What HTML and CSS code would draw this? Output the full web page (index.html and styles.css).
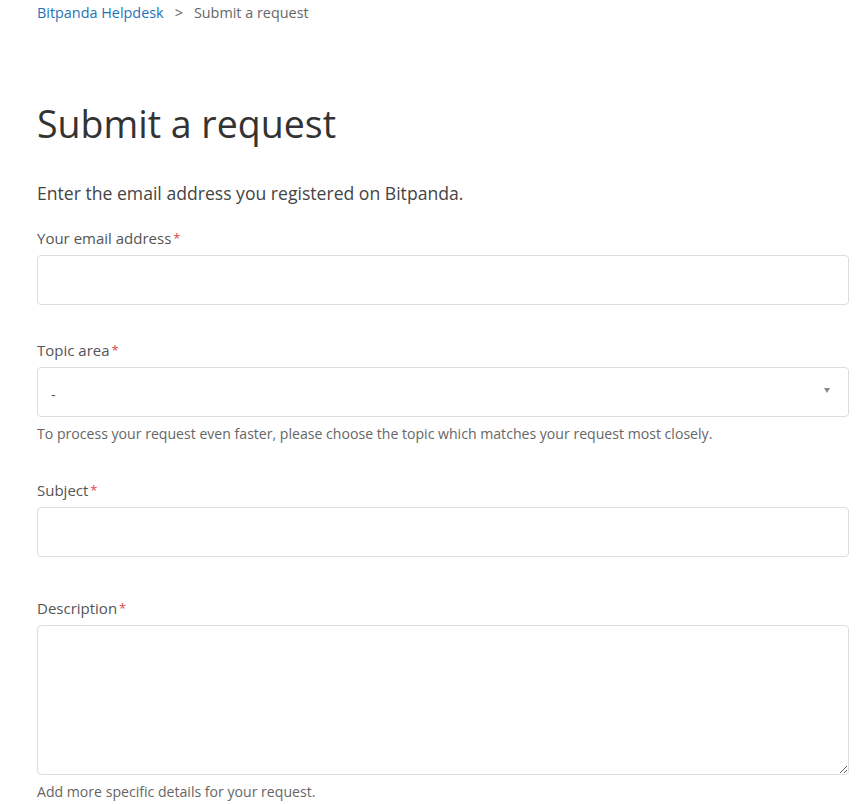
FILE: index.html
```html
<!DOCTYPE html>
<html>
<head>
<meta name="viewport" content="width=device-width, initial-scale=1.0">
<link rel="stylesheet" href="styles.css">
</head>
<body>
<div class="page">
  <ol class="crumbs">
    <li><a href="#">Bitpanda Helpdesk</a></li>
    <li class="sep">&gt;</li>
    <li>Submit a request</li>
  </ol>

  <h1 class="title">Submit a request</h1>

  <p class="intro">Enter the email address you registered on Bitpanda.</p>

  <form class="request-form">
    <div class="field">
      <label>Your email address<span class="req">*</span></label>
      <input type="text">
    </div>

    <div class="field">
      <label>Topic area<span class="req">*</span></label>
      <div class="select">
        <span>-</span>
        <span class="caret"></span>
      </div>
      <p class="hint">To process your request even faster, please choose the topic which matches your request most closely.</p>
    </div>

    <div class="field after-hint">
      <label>Subject<span class="req">*</span></label>
      <input type="text">
    </div>

    <div class="field field-wide">
      <label>Description<span class="req">*</span></label>
      <textarea></textarea>
      <p class="hint">Add more specific details for your request.</p>
    </div>
  </form>
</div>
</body>
</html>
```

FILE: styles.css
```css
body, html {
  margin: 0;
  padding: 0;
  background: #fff;
}

body {
  font-family: "Open Sans", "Noto Sans", sans-serif;
  color: #555;
}

.page {
  padding: 0 14px 0 37px;
}

.crumbs {
  list-style: none;
  margin: 0;
  padding: 4px 0 0;
  display: flex;
  gap: 9px;
  font-size: 14.4px;
  line-height: 18px;
  color: #666;
}

.crumbs a {
  color: #1f73b7;
  text-decoration: none;
}

.crumbs .sep {
  padding: 0 2px;
}

.title {
  margin: 76px 0 0;
  font-size: 37.5px;
  font-weight: 400;
  line-height: 52px;
  color: #333;
}

.intro {
  margin: 31px 0 0;
  font-size: 17.6px;
  line-height: 24px;
  color: #444;
}

.field {
  margin-top: 23px;
}

.field + .field {
  margin-top: 35px;
}

.field + .after-hint {
  margin-top: 36px;
}

.field + .field-wide {
  margin-top: 41px;
}

.field label {
  display: block;
  font-size: 15px;
  line-height: 20px;
  color: #555;
  margin-bottom: 7px;
}

.req {
  color: #e3454b;
  font-size: 13px;
  margin-left: 2px;
  vertical-align: 1px;
}

.field input,
.field textarea,
.select {
  display: block;
  box-sizing: border-box;
  width: 100%;
  border: 1px solid #ddd;
  border-radius: 4px;
  background: #fff;
  margin: 0;
  font: inherit;
}

.field input {
  height: 50px;
}

.field textarea {
  height: 150px;
  resize: vertical;
}

.select {
  height: 50px;
  display: flex;
  align-items: center;
  justify-content: space-between;
  padding: 4px 18px 0 13px;
  font-size: 14px;
  color: #555;
}

.caret {
  width: 0;
  height: 0;
  border-left: 3.5px solid transparent;
  border-right: 3.5px solid transparent;
  border-top: 5px solid #888;
  margin-top: -8px;
}

.hint {
  margin: 7px 0 0;
  font-size: 14.1px;
  line-height: 20px;
  color: #666;
}
```
